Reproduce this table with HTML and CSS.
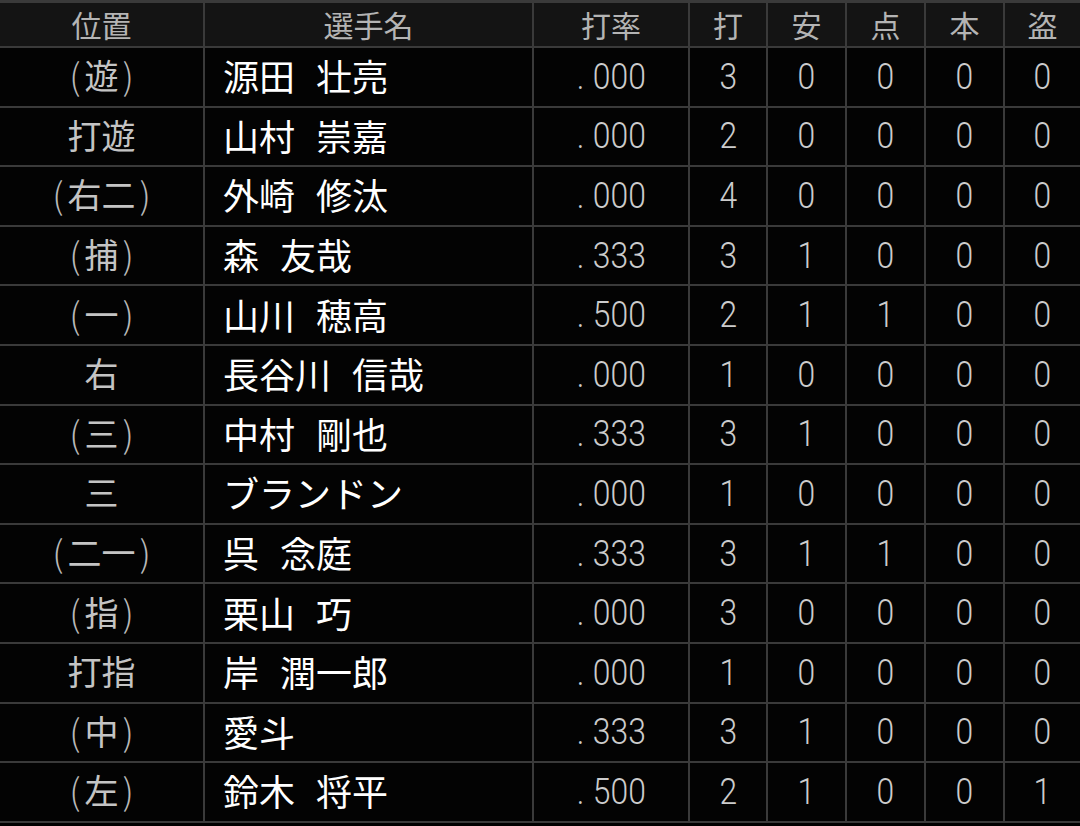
FILE: index.html
```html
<!DOCTYPE html>
<html lang="ja">
<head>
<meta charset="utf-8">
<link rel="stylesheet" href="styles.css">
</head>
<body>
<div class="table">
  <div class="row head">
    <div class="c pos">位置</div><div class="c">選手名</div><div class="c">打率</div><div class="c">打</div><div class="c">安</div><div class="c">点</div><div class="c">本</div><div class="c">盗</div>
  </div>
  <div class="row"><div class="c pos"><span class="p">(</span>遊<span class="p">)</span></div><div class="c name">源田<span class="sp"></span>壮亮</div><div class="c num"><span class="n"><span class="dot">.</span>000</span></div><div class="c num"><span class="n">3</span></div><div class="c num"><span class="n">0</span></div><div class="c num"><span class="n">0</span></div><div class="c num"><span class="n">0</span></div><div class="c num"><span class="n">0</span></div></div>
  <div class="row"><div class="c pos">打遊</div><div class="c name">山村<span class="sp"></span>崇嘉</div><div class="c num"><span class="n"><span class="dot">.</span>000</span></div><div class="c num"><span class="n">2</span></div><div class="c num"><span class="n">0</span></div><div class="c num"><span class="n">0</span></div><div class="c num"><span class="n">0</span></div><div class="c num"><span class="n">0</span></div></div>
  <div class="row"><div class="c pos"><span class="p">(</span>右二<span class="p">)</span></div><div class="c name">外崎<span class="sp"></span>修汰</div><div class="c num"><span class="n"><span class="dot">.</span>000</span></div><div class="c num"><span class="n">4</span></div><div class="c num"><span class="n">0</span></div><div class="c num"><span class="n">0</span></div><div class="c num"><span class="n">0</span></div><div class="c num"><span class="n">0</span></div></div>
  <div class="row"><div class="c pos"><span class="p">(</span>捕<span class="p">)</span></div><div class="c name">森<span class="sp"></span>友哉</div><div class="c num"><span class="n"><span class="dot">.</span>333</span></div><div class="c num"><span class="n">3</span></div><div class="c num"><span class="n">1</span></div><div class="c num"><span class="n">0</span></div><div class="c num"><span class="n">0</span></div><div class="c num"><span class="n">0</span></div></div>
  <div class="row"><div class="c pos"><span class="p">(</span>一<span class="p">)</span></div><div class="c name">山川<span class="sp"></span>穂高</div><div class="c num"><span class="n"><span class="dot">.</span>500</span></div><div class="c num"><span class="n">2</span></div><div class="c num"><span class="n">1</span></div><div class="c num"><span class="n">1</span></div><div class="c num"><span class="n">0</span></div><div class="c num"><span class="n">0</span></div></div>
  <div class="row"><div class="c pos">右</div><div class="c name">長谷川<span class="sp"></span>信哉</div><div class="c num"><span class="n"><span class="dot">.</span>000</span></div><div class="c num"><span class="n">1</span></div><div class="c num"><span class="n">0</span></div><div class="c num"><span class="n">0</span></div><div class="c num"><span class="n">0</span></div><div class="c num"><span class="n">0</span></div></div>
  <div class="row"><div class="c pos"><span class="p">(</span>三<span class="p">)</span></div><div class="c name">中村<span class="sp"></span>剛也</div><div class="c num"><span class="n"><span class="dot">.</span>333</span></div><div class="c num"><span class="n">3</span></div><div class="c num"><span class="n">1</span></div><div class="c num"><span class="n">0</span></div><div class="c num"><span class="n">0</span></div><div class="c num"><span class="n">0</span></div></div>
  <div class="row"><div class="c pos">三</div><div class="c name">ブランドン</div><div class="c num"><span class="n"><span class="dot">.</span>000</span></div><div class="c num"><span class="n">1</span></div><div class="c num"><span class="n">0</span></div><div class="c num"><span class="n">0</span></div><div class="c num"><span class="n">0</span></div><div class="c num"><span class="n">0</span></div></div>
  <div class="row"><div class="c pos"><span class="p">(</span>二一<span class="p">)</span></div><div class="c name">呉<span class="sp"></span>念庭</div><div class="c num"><span class="n"><span class="dot">.</span>333</span></div><div class="c num"><span class="n">3</span></div><div class="c num"><span class="n">1</span></div><div class="c num"><span class="n">1</span></div><div class="c num"><span class="n">0</span></div><div class="c num"><span class="n">0</span></div></div>
  <div class="row"><div class="c pos"><span class="p">(</span>指<span class="p">)</span></div><div class="c name">栗山<span class="sp"></span>巧</div><div class="c num"><span class="n"><span class="dot">.</span>000</span></div><div class="c num"><span class="n">3</span></div><div class="c num"><span class="n">0</span></div><div class="c num"><span class="n">0</span></div><div class="c num"><span class="n">0</span></div><div class="c num"><span class="n">0</span></div></div>
  <div class="row"><div class="c pos">打指</div><div class="c name">岸<span class="sp"></span>潤一郎</div><div class="c num"><span class="n"><span class="dot">.</span>000</span></div><div class="c num"><span class="n">1</span></div><div class="c num"><span class="n">0</span></div><div class="c num"><span class="n">0</span></div><div class="c num"><span class="n">0</span></div><div class="c num"><span class="n">0</span></div></div>
  <div class="row"><div class="c pos"><span class="p">(</span>中<span class="p">)</span></div><div class="c name">愛斗</div><div class="c num"><span class="n"><span class="dot">.</span>333</span></div><div class="c num"><span class="n">3</span></div><div class="c num"><span class="n">1</span></div><div class="c num"><span class="n">0</span></div><div class="c num"><span class="n">0</span></div><div class="c num"><span class="n">0</span></div></div>
  <div class="row"><div class="c pos"><span class="p">(</span>左<span class="p">)</span></div><div class="c name">鈴木<span class="sp"></span>将平</div><div class="c num"><span class="n"><span class="dot">.</span>500</span></div><div class="c num"><span class="n">2</span></div><div class="c num"><span class="n">1</span></div><div class="c num"><span class="n">0</span></div><div class="c num"><span class="n">0</span></div><div class="c num"><span class="n">1</span></div></div>
</div>
</body>
</html>
```

FILE: styles.css
```css
html, body {
  margin: 0;
  padding: 0;
  background: #000;
}
body {
  width: 1080px;
  height: 826px;
  overflow: hidden;
  font-family: "Noto Sans CJK JP", "Noto Sans", sans-serif;
}
.table {
  border-top: 3px solid #3a3a3a;
}
.row {
  display: grid;
  grid-template-columns: 203px 329px 156px 78px 79px 79px 79px 77px;
  height: 57.6px;
  border-bottom: 2px solid #3a3a3a;
  background: #030303;
}
.row.head {
  height: 43px;
  background: #141414;
}
.c {
  display: flex;
  align-items: center;
  justify-content: center;
  border-left: 2px solid #3a3a3a;
  color: #c8c8c8;
  font-size: 34px;
  line-height: 1;
  white-space: nowrap;
  padding-bottom: 3px;
  box-sizing: border-box;
}
.c:first-child {
  border-left: none;
}
.head .c {
  color: #b4b4b4;
  font-size: 30px;
  font-weight: 400;
  padding-bottom: 1px;
}
.pos {
  color: #c4c4c4;
  font-size: 34px;
}
.p {
  font-weight: 300;
  font-size: 36px;
  color: #b8b8b8;
  margin: 0 4px;
  position: relative;
  top: -1px;
}
.name {
  justify-content: flex-start;
  padding-left: 18px;
  color: #ffffff;
  font-size: 36px;
}
.sp {
  display: inline-block;
  width: 21px;
}
.num {
  font-family: Roboto, "Liberation Sans", sans-serif;
  font-weight: 300;
  font-size: 37px;
  color: #cccccc;
  padding-bottom: 1px;
}
.n {
  display: inline-block;
  transform: scaleX(0.86);
}
.dot {
  margin-right: 10px;
}
```
